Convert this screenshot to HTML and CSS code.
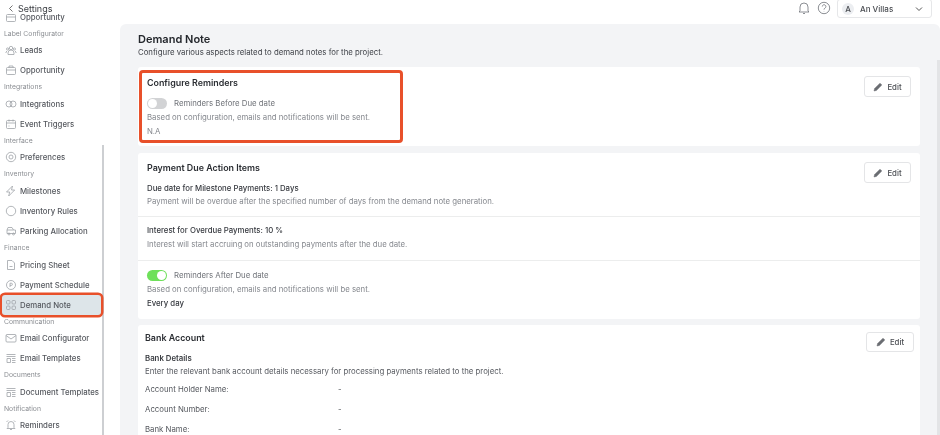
FILE: index.html
```html
<!DOCTYPE html>
<html lang="en">
<head>
<meta charset="utf-8">
<title>Demand Note</title>
<link rel="stylesheet" href="styles.css">
</head>
<body>
<div class="page">
  <aside class="sidebar">
    <div class="side-head">
      <svg class="back" viewBox="0 0 8 10"><path d="M6 1 2 5l4 4"/></svg>
      <span>Settings</span>
    </div>
    <nav class="side-list">
      <a class="item item-first"><svg class="ico" viewBox="0 0 12 12"><rect x="1.500" y="3.500" width="9" height="7" rx="1"/><path d="M4 3.500V2h4v1.500M1.500 6h9"/></svg>Opportunity</a>
      <div class="group">Label Configurator</div>
      <a class="item"><svg class="ico" viewBox="0 0 12 12"><circle cx="6" cy="4" r="1.700"/><circle cx="2.600" cy="5" r="1.100"/><circle cx="9.400" cy="5" r="1.100"/><path d="M3 10.500V9a3 3 0 0 1 6 0v1.500zM1 9V8l1-1M11 9V8l-1-1"/></svg>Leads</a>
      <a class="item"><svg class="ico" viewBox="0 0 12 12"><rect x="1.500" y="3.500" width="9" height="7" rx="1"/><path d="M4 3.500V2h4v1.500M1.500 6h9"/></svg>Opportunity</a>
      <div class="group">Integrations</div>
      <a class="item"><svg class="ico" viewBox="0 0 12 12"><circle cx="4" cy="6" r="3"/><circle cx="8" cy="6" r="3"/></svg>Integrations</a>
      <a class="item"><svg class="ico" viewBox="0 0 12 12"><rect x="1.500" y="2.500" width="9" height="8" rx="1"/><path d="M1.500 5h9M4 1.500v2M8 1.500v2M3.500 8h1"/></svg>Event Triggers</a>
      <div class="group">Interface</div>
      <a class="item"><svg class="ico" viewBox="0 0 12 12"><circle cx="6" cy="6" r="4.700"/><circle cx="6" cy="6" r="2"/></svg>Preferences</a>
      <div class="group">Inventory</div>
      <a class="item"><svg class="ico" viewBox="0 0 12 12"><path d="M7.500 1 1.500 7h3.200l-1 4 6-6H6.500z"/></svg>Milestones</a>
      <a class="item"><svg class="ico" viewBox="0 0 12 12"><circle cx="6" cy="6" r="4.700"/></svg>Inventory Rules</a>
      <a class="item"><svg class="ico" viewBox="0 0 12 12"><path d="M2 8.500V5l1-2.500h4L8.500 5h2v3.500zM2 5h6.500"/><circle cx="4" cy="9" r="1"/><circle cx="8.500" cy="9" r="1"/></svg>Parking Allocation</a>
      <div class="group">Finance</div>
      <a class="item"><svg class="ico" viewBox="0 0 12 12"><path d="M2.500 1.500H7L9.500 4v6.500h-7zM4.500 7.500h3"/></svg>Pricing Sheet</a>
      <a class="item"><svg class="ico" viewBox="0 0 12 12"><circle cx="6" cy="6" r="4.500"/><path d="M5 8V4.200h1.300a1 1 0 0 1 0 2.200H5"/></svg>Payment Schedule</a>
      <a class="item item-active"><svg class="ico" viewBox="0 0 12 12"><rect x="1.500" y="1.500" width="3.500" height="3.500" rx="1"/><rect x="7" y="1.500" width="3.500" height="3.500" rx="1"/><rect x="1.500" y="7" width="3.500" height="3.500" rx="1"/><rect x="7" y="7" width="3.500" height="3.500" rx="1"/></svg>Demand Note</a>
      <div class="group">Communication</div>
      <a class="item"><svg class="ico" viewBox="0 0 12 12"><rect x="1" y="2.500" width="10" height="7.500" rx="1"/><path d="m1 3.500 5 3.500 5-3.500"/></svg>Email Configurator</a>
      <a class="item"><svg class="ico" viewBox="0 0 12 12"><path d="M1.500 2.500h9M1.500 4.500h9M2 6.500h3.500v4H2zM7 6.500h3.500M7 8.500h3.500M7 10.500h3.500"/></svg>Email Templates</a>
      <div class="group">Documents</div>
      <a class="item"><svg class="ico" viewBox="0 0 12 12"><path d="M1.500 2.500h9M1.500 4.500h9M2 6.500h3.500v4H2zM7 6.500h3.500M7 8.500h3.500M7 10.500h3.500"/></svg>Document Templates</a>
      <div class="group">Notification</div>
      <a class="item"><svg class="ico" viewBox="0 0 12 12"><path d="M3 8.500v-3a3 3 0 0 1 6 0v3l1 1H2zM5 10.500h2M1.500 3 3 1.500M10.500 3 9 1.500"/></svg>Reminders</a>
    </nav>
    <div class="side-scroll" aria-hidden="true"></div>
  </aside>

  <div class="content">
    <header class="topbar">
      <svg class="top-ico" viewBox="0 0 14 14"><path d="M3 10V6a4 4 0 0 1 8 0v4l1 1H2zM6 12.500h2"/></svg>
      <svg class="top-ico" viewBox="0 0 14 14"><circle cx="7" cy="7" r="5.700"/><path d="M5.300 5.500a1.800 1.800 0 1 1 2.700 1.600c-.7.400-1 .8-1 1.500M7 10.100v.3"/></svg>
      <div class="user">
        <span class="avatar">A</span>
        <span class="user-name">An Villas</span>
        <svg class="chev" viewBox="0 0 8 6"><path d="m1 1.500 3 3 3-3"/></svg>
      </div>
    </header>

    <main class="panel">
      <h1 class="page-title">Demand Note</h1>
      <p class="page-sub">Configure various aspects related to demand notes for the project.</p>

      <section class="card card-reminders">
        <div class="body">
          <h2 class="card-title">Configure Reminders</h2>
          <div class="toggle-row"><span class="switch"></span><span class="toggle-label">Reminders Before Due date</span></div>
          <p class="line muted">Based on configuration, emails and notifications will be sent.</p>
          <p class="line muted">N.A</p>
        </div>
        <button class="edit"><svg viewBox="0 0 10 10"><path d="M1 9l.6-2.400L7 1.200l1.800 1.800L3.400 8.400z"/></svg>Edit</button>
        <div class="callout" aria-hidden="true"></div>
      </section>

      <section class="card card-due">
        <div class="section section-a">
          <div class="section-main">
            <h2 class="card-title title-wide">Payment Due Action Items</h2>
            <p class="line strong short">Due date for Milestone Payments: 1 Days</p>
            <p class="line muted">Payment will be overdue after the specified number of days from the demand note generation.</p>
          </div>
          <button class="edit"><svg viewBox="0 0 10 10"><path d="M1 9l.6-2.400L7 1.200l1.800 1.800L3.400 8.400z"/></svg>Edit</button>
        </div>
        <div class="section section-b">
          <p class="line strong">Interest for Overdue Payments: 10 %</p>
          <p class="line muted">Interest will start accruing on outstanding payments after the due date.</p>
        </div>
        <div class="section section-c">
          <div class="toggle-row"><span class="switch switch-on"></span><span class="toggle-label">Reminders After Due date</span></div>
          <p class="line muted">Based on configuration, emails and notifications will be sent.</p>
          <p class="line strong">Every day</p>
        </div>
      </section>

      <section class="card card-bank">
        <div class="body">
          <h2 class="card-title title-wide">Bank Account</h2>
          <p class="line bank-head short">Bank Details</p>
          <p class="line muted-dark">Enter the relevant bank account details necessary for processing payments related to the project.</p>
          <dl class="fields">
            <div class="field"><dt>Account Holder Name:</dt><dd>-</dd></div>
            <div class="field"><dt>Account Number:</dt><dd>-</dd></div>
            <div class="field"><dt>Bank Name:</dt><dd>-</dd></div>
          </dl>
        </div>
        <button class="edit"><svg viewBox="0 0 10 10"><path d="M1 9l.6-2.400L7 1.200l1.800 1.800L3.400 8.400z"/></svg>Edit</button>
      </section>
      <div class="panel-scroll" aria-hidden="true"></div>
    </main>
  </div>
</div>
</body>
</html>
```
FILE: styles.css
```css
* { box-sizing: border-box; }
html, body { margin: 0; height: 435px; overflow: hidden; background: #fff; }
body { font-family: Inter, "Liberation Sans", sans-serif; color: #2f3238; filter: blur(0.45px); }
h1, h2, p, dl, dd { margin: 0; }

.page { display: grid; grid-template-columns: 120px 820px; height: 435px; overflow: hidden; }

.sidebar { position: relative; height: 435px; overflow: hidden; display: flex; flex-direction: column; }
.side-head { height: 14px; display: flex; align-items: center; padding: 2px 0 0 8px; gap: 4px; font-size: 9px; color: #3a3d42; background: #fff; position: relative; z-index: 1; flex: none; }
.back { width: 6px; height: 9px; fill: none; stroke: #444; stroke-width: 1; }
.side-list { display: flex; flex-direction: column; width: 104px; }
.item { height: 20px; display: flex; align-items: center; gap: 3px; padding-left: 5px; font-size: 7.8px; font-weight: 500; color: #55585e; white-space: nowrap; flex: none; }
.item-first { margin-top: -7.400px; }
.item-active { margin: 0 3px 0 2px; padding-left: 3px; background: #dde5e9; box-shadow: 0 0 0 2.500px #e8502a; border-radius: 3px; position: relative; z-index: 1; }
.ico { width: 12px; height: 12px; fill: none; stroke: #a0a3a8; stroke-width: 0.8; flex: none; }
.group { height: 13.600px; line-height: 13.600px; padding-left: 4px; font-size: 6.8px; color: #8a8d92; flex: none; }
.side-scroll { position: absolute; left: 102px; top: 145px; width: 2px; height: 290px; background: #cdcfd2; }

.content { display: flex; flex-direction: column; height: 435px; }
.topbar { height: 24px; flex: none; display: flex; justify-content: flex-end; align-items: flex-start; gap: 6px; padding-right: 8px; }
.top-ico { width: 14px; height: 14px; margin-top: 1px; fill: none; stroke: #6f7278; stroke-width: 0.8; }
.user { width: 95px; height: 19px; margin-top: -1px; border: 1px solid #e6e7e9; border-radius: 3px; display: flex; align-items: center; padding: 0 8px 0 4px; font-size: 8px; font-weight: 500; color: #4a4d52; }
.avatar { width: 12px; height: 12px; border-radius: 50%; background: #eceef1; font-size: 8px; display: flex; align-items: center; justify-content: center; flex: none; }
.user-name { margin-left: 6px; flex: 1; }
.chev { width: 8px; height: 6px; fill: none; stroke: #555; stroke-width: 1; }

.panel { flex: 1; min-height: 0; background: #f3f4f6; border-radius: 6px 6px 0 0; padding: 9px 20px 0 18px; overflow: hidden; position: relative; }
.panel-scroll { position: absolute; right: 0; top: 36px; width: 3px; bottom: 0; background: #e3e4e6; }
.page-title { font-size: 11px; line-height: 13px; font-weight: 600; color: #24272c; }
.page-sub { font-size: 7.8px; line-height: 12px; color: #3f4248; margin-bottom: 9px; }

.card { background: #fff; border-radius: 3px; position: relative; }
.card-reminders { height: 79px; padding: 9px 9px 8px; display: flex; justify-content: space-between; align-items: flex-start; margin-bottom: 7px; }
.card-due { height: 166px; margin-bottom: 6px; }
.card-bank { height: 200px; padding: 6px 6px 0 7px; display: flex; justify-content: space-between; align-items: flex-start; }

.card-title { font-size: 8.9px; line-height: 14px; font-weight: 600; color: #2b2e33; margin-bottom: 6px; }
.title-wide { margin-bottom: 7px; }
.line { font-size: 7.8px; line-height: 14px; white-space: nowrap; }
.short { line-height: 12px; }
.muted { color: #85888e; }
.strong { color: #36393f; font-weight: 500; }
.muted-dark { color: #575a60; }
.bank-head { font-weight: 600; color: #3a3d42; }

.toggle-row { display: flex; align-items: center; gap: 7px; height: 14px; }
.toggle-label { font-size: 7.8px; color: #707379; }
.switch { width: 20px; height: 11px; border-radius: 6px; background: #d2d3d5; position: relative; flex: none; }
.switch::after { content: ""; position: absolute; left: 1px; top: 1px; width: 9px; height: 9px; border-radius: 50%; background: #fff; }
.switch-on { background: #6ee05a; }
.switch-on::after { left: 10px; }

.section { padding: 0 9px; border-bottom: 1px solid #eceded; }
.section:last-child { border-bottom: 0; }
.section-a { height: 64px; padding-top: 8px; display: flex; justify-content: space-between; align-items: flex-start; }
.section-a .edit { margin-top: 1px; }
.section-b { height: 44px; padding-top: 6px; }
.section-c { padding-top: 7px; }

.edit { width: 47px; height: 21px; background: #fff; border: 1px solid #e4e5e7; border-radius: 3px; font: 500 7.8px Inter, "Liberation Sans", sans-serif; color: #4a4d52; display: flex; align-items: center; justify-content: center; gap: 4px; padding: 0; flex: none; }
.edit svg { width: 10px; height: 10px; fill: #6a6d72; stroke: #6a6d72; stroke-width: 0.5; }
.card-bank .edit { width: 48px; height: 20px; margin-top: 1px; }

.fields { margin-top: 1px; }
.field { height: 20px; display: flex; align-items: center; font-size: 7.8px; color: #55585e; }
.field dt { width: 193px; }

.callout { position: absolute; left: 1px; top: 3px; width: 264px; height: 73px; border: 3px solid #e8502a; border-radius: 4px; pointer-events: none; }
```
